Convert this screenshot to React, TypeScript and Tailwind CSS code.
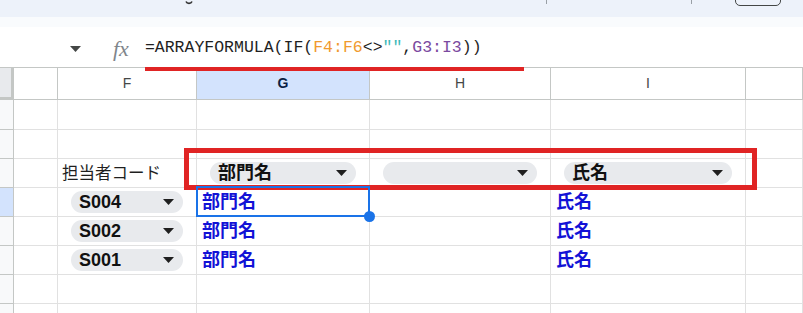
import type { ReactNode } from 'react';

const gridCols = 'grid grid-cols-[14px_44px_139px_173px_181px_195px_1fr]';

function Caret({ className = 'fill-[#1f1f1f]' }: { className?: string }) {
  return (
    <svg width="11" height="6" viewBox="0 0 11 6" className={className}>
      <path d="M0 0h11L5.5 6z" />
    </svg>
  );
}

function Chip({ label }: { label?: string }) {
  return (
    <div className="mx-[13px] flex h-[22px] flex-1 items-center justify-between rounded-full bg-[#e8eaed] pl-[8px] pr-[9px]">
      <span className="text-[18px] font-bold leading-none text-[#111]">{label}</span>
      <Caret />
    </div>
  );
}

function BlueText({ children }: { children: ReactNode }) {
  return <span className="pl-[5px] text-[18px] font-bold leading-none text-[#1212d6]">{children}</span>;
}

interface RowProps {
  height: string;
  cells?: ReactNode[];
  highlighted?: boolean;
  selectedCol?: number;
}

function Row({ height, cells = [], highlighted, selectedCol }: RowProps) {
  return (
    <div className={`${gridCols} ${height}`}>
      <div className={`border-r border-b border-[#c4c7c5] ${highlighted ? 'bg-[#d3e3fd]' : 'bg-[#f8f9fa]'}`} />
      {[0, 1, 2, 3, 4, 5].map((i) => (
        <div key={i} className="relative flex items-center border-r border-b border-[#e1e1e1]">
          {cells[i]}
          {selectedCol === i && (
            <>
              <div className="pointer-events-none absolute -left-px -top-[2px] -right-px -bottom-px z-10 border-2 border-[#1a73e8]" />
              <div className="absolute -right-[6px] -bottom-[6px] z-20 h-[11px] w-[11px] rounded-full bg-[#1a73e8]" />
            </>
          )}
        </div>
      ))}
    </div>
  );
}

function TopBar() {
  return (
    <>
      <div className="relative h-[17px] bg-[#edf2fa]">
        {/* bottom edge of a toolbar glyph */}
        <svg className="absolute left-[185px] top-0" width="8" height="5" viewBox="0 0 8 5">
          <path d="M1 1.5c1 2.5 5 2.5 6 0" fill="none" stroke="#333" strokeWidth="1.6" />
        </svg>
        <div className="absolute left-[546px] top-0 h-[4px] w-px bg-[#9aa0a6]" />
        <div className="absolute left-[691px] top-0 h-[4px] w-px bg-[#9aa0a6]" />
        <div className="absolute left-[735px] -top-[10px] h-[16px] w-[46px] rounded-[5px] border border-[#444746]" />
      </div>
      <div className="h-[10px] bg-[#f9fbfd]" />
    </>
  );
}

function FormulaBar() {
  return (
    <div className="flex h-[40px] items-center bg-white pt-[3px]">
      <div className="ml-[70px] w-[11px]">
        <Caret className="fill-[#444746]" />
      </div>
      <span className="ml-[32px] font-['Liberation_Serif',serif] text-[22px] italic leading-none text-[#80868b]">fx</span>
      <div className="ml-[16px] font-['Liberation_Mono',monospace] text-[16.5px] leading-none text-[#1f1f1f]">
        =ARRAYFORMULA(IF(<span className="text-[#f09a2e]">F4:F6</span>&lt;&gt;
        <span className="text-[#3cb8b8]">""</span>,<span className="text-[#7b4aa0]">G3:I3</span>))
      </div>
    </div>
  );
}

function ColumnHeader() {
  const letters = ['', 'F', 'G', 'H', 'I', ''];
  return (
    <div className={`${gridCols} h-[33px] border-t border-[#c4c7c5]`}>
      <div className="border-r-[3px] border-b-[3px] border-[#c4c7c5] bg-[#e8eaed]" />
      {letters.map((l, i) => (
        <div
          key={i}
          className={`flex items-center justify-center border-r border-b border-[#c4c7c5] text-[14px] ${
            l === 'G' ? 'bg-[#d3e3fd] font-bold text-[#0b1f44]' : 'bg-white text-[#444746]'
          }`}
        >
          {l}
        </div>
      ))}
    </div>
  );
}

export default function App() {
  const codes = ['S004', 'S002', 'S001'];
  return (
    <div className="relative h-[313px] w-[803px] overflow-hidden bg-white font-['Liberation_Sans','Noto_Sans_CJK_JP',sans-serif]">
      <TopBar />
      <FormulaBar />
      <ColumnHeader />
      <Row height="h-[30px]" />
      <Row height="h-[29px]" />
      <Row
        height="h-[29px]"
        cells={[
          null,
          <span className="pl-[4px] text-[16.5px] leading-none text-[#1f1f1f]">担当者コード</span>,
          <Chip label="部門名" />,
          <Chip />,
          <Chip label="氏名" />,
        ]}
      />
      {codes.map((code, idx) => (
        <Row
          key={code}
          height="h-[29px]"
          highlighted={idx === 0}
          selectedCol={idx === 0 ? 2 : undefined}
          cells={[null, <Chip label={code} />, <BlueText>部門名</BlueText>, null, <BlueText>氏名</BlueText>]}
        />
      ))}
      <Row height="h-[29px]" />
      <Row height="h-[29px]" />

      {/* annotations */}
      <div className="absolute left-[145px] top-[67px] h-[4px] w-[379px] bg-[#e02424]" />
      <div className="absolute left-[184px] top-[148px] h-[42px] w-[573px] border-[5px] border-[#e02424]" />
    </div>
  );
}
